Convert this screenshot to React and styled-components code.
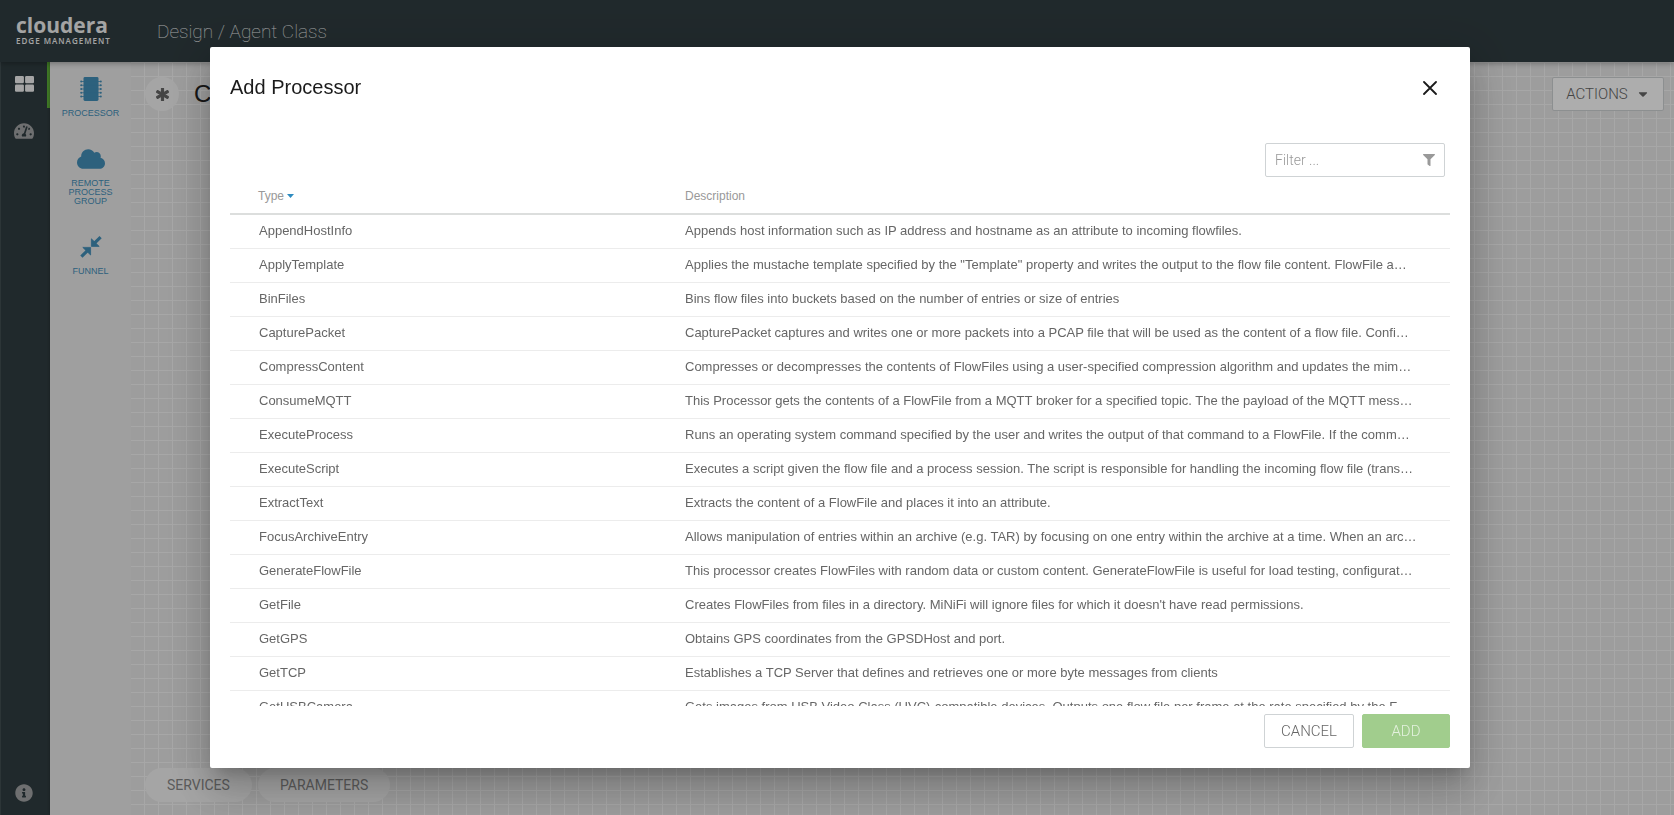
import React from "react";
import styled, { createGlobalStyle } from "styled-components";
import {
  FaTachometerAlt,
  FaInfoCircle,
  FaCloud,
  FaAsterisk,
  FaFilter,
  FaCaretDown,
} from "react-icons/fa";

const sans = '"Liberation Sans", Arial, sans-serif';
const light = 'Roboto, "Liberation Sans", sans-serif';
const brand = '"Open Sans", "Liberation Sans", sans-serif';

const GlobalStyle = createGlobalStyle`
  *, *::before, *::after { box-sizing: border-box; }
  body { margin: 0; font-family: ${sans}; color: #666; overflow: hidden; }
  button, input { font: inherit; color: inherit; }
  h1, h2, p { margin: 0; font-weight: 400; }
`;

const Page = styled.div`
  display: flex;
  flex-direction: column;
  height: 100vh;
`;

const TopBar = styled.header`
  display: flex;
  align-items: center;
  flex: none;
  height: 62px;
  padding: 0 16px;
  gap: 47px;
  background: #303d41;
  box-shadow: 0 1px 6px rgba(0, 0, 0, 0.35);
  z-index: 1;
`;

const Brand = styled.a`
  display: flex;
  flex-direction: column;
  width: 94px;
  color: #f2f2f2;
  text-decoration: none;
  white-space: nowrap;
`;

const BrandName = styled.span`
  font: 700 21px/20px ${brand};
`;

const BrandProduct = styled.span`
  font: 600 8px/12px ${brand};
  letter-spacing: 1px;
`;

const Crumbs = styled.h1`
  padding-top: 2px;
  font: 100 19px/24px ${light};
  color: #eef0f0;
`;

const Body = styled.div`
  display: flex;
  flex: 1;
  min-height: 0;
`;

const NavRail = styled.nav`
  display: flex;
  flex-direction: column;
  flex: none;
  width: 50px;
  background: #303d41;
  border-left: 1px solid #414e52;
`;

const NavItem = styled.a`
  display: flex;
  align-items: center;
  justify-content: center;
  height: ${(p) => (p.$last ? 44 : 46)}px;
  border-right: 3px solid ${(p) => (p.$active ? "#5eb138" : "transparent")};
  color: ${(p) => (p.$active ? "#f4f4f4" : "#a2a4a6")};
  ${(p) => p.$last && "margin-top: auto;"}
`;

const Palette = styled.aside`
  display: flex;
  flex-direction: column;
  align-items: center;
  gap: 29px;
  flex: none;
  width: 81px;
  padding-top: 15px;
  background: #ebebeb;
  box-shadow: 0 0 3px rgba(0, 0, 0, 0.3);
`;

const PaletteItem = styled.button`
  display: flex;
  flex-direction: column;
  align-items: center;
  gap: 8px;
  width: 60px;
  padding: 0;
  border: 0;
  background: none;
  color: #438fb9;
  font-size: 9px;
  line-height: 9px;

  svg { height: 24px; }
`;

const Canvas = styled.main`
  display: flex;
  flex-direction: column;
  justify-content: space-between;
  flex: 1;
  min-width: 0;
  padding: 15px 10px 13px 14px;
  background-color: #e8e8e8;
  background-image: linear-gradient(#f7f7f7 1px, transparent 1px),
    linear-gradient(90deg, #f7f7f7 1px, transparent 1px);
  background-size: 14px 14px;
  background-position: 13px 14px;
`;

const CanvasBar = styled.div`
  display: flex;
  align-items: center;
  gap: ${(p) => p.$gap}px;
`;

const StatusDot = styled.span`
  display: flex;
  align-items: center;
  justify-content: center;
  width: 34px;
  height: 34px;
  border-radius: 50%;
  background: #f4f4f4;
  color: #666;
`;

const FlowTitle = styled.h2`
  flex: 1;
  font-size: 24px;
  line-height: 34px;
  color: #222;
`;

const Button = styled.button`
  display: flex;
  align-items: center;
  justify-content: center;
  height: 34px;
  min-width: ${(p) => p.$width || 88}px;
  gap: 8px;
  padding: 0 13px;
  border: 1px solid ${(p) => (p.$primary ? "#a1cd8d" : "#cfd3d5")};
  border-radius: 2px;
  background: ${(p) => (p.$primary ? "#a1cd8d" : "#fff")};
  color: ${(p) => (p.$primary ? "#e4f1de" : "#666")};
  font: 300 15px/20px ${light};
`;

const Pill = styled.button`
  height: 34px;
  padding: 0 22px;
  border: 0;
  border-radius: 17px;
  background: #f4f4f4;
  color: #888;
  font: 400 14px/20px ${light};
`;

const Backdrop = styled.div`
  position: fixed;
  inset: 0;
  z-index: 2;
  display: flex;
  padding: 47px 204px 47px 210px;
  background: rgba(0, 0, 0, 0.32);
`;

const Dialog = styled.section`
  display: flex;
  flex-direction: column;
  flex: 1;
  min-width: 0;
  padding: 20px;
  border-radius: 2px;
  background: #fff;
  box-shadow: 0 11px 15px -7px rgba(0, 0, 0, 0.2),
    0 24px 38px 3px rgba(0, 0, 0, 0.14), 0 9px 46px 8px rgba(0, 0, 0, 0.12);
`;

const DialogHead = styled.header`
  display: flex;
  align-items: center;
  justify-content: space-between;
  height: 42px;
  margin-bottom: 34px;
`;

const DialogTitle = styled.h2`
  padding-bottom: 2px;
  font-size: 20px;
  line-height: 24px;
  color: #1b1b1b;
`;

const CloseButton = styled.button`
  display: flex;
  align-items: center;
  justify-content: center;
  width: 40px;
  height: 40px;
  padding: 0;
  border: 0;
  background: none;
  color: #1b1b1b;
`;

const FilterBox = styled.label`
  display: flex;
  align-items: center;
  align-self: flex-end;
  flex: none;
  width: 180px;
  height: 34px;
  margin-right: 5px;
  padding: 0 9px;
  border: 1px solid #cfd3d5;
  border-radius: 2px;
  color: #999;
`;

const FilterInput = styled.input`
  flex: 1;
  min-width: 0;
  padding: 0;
  border: 0;
  outline: 0;
  background: none;
  font: 300 14px/20px ${light};

  &::placeholder { color: #999; opacity: 1; }
`;

const TableScroll = styled.div`
  flex: 1;
  min-height: 0;
  overflow-y: auto;
  scrollbar-width: none;
`;

const Table = styled.table`
  width: 100%;
  table-layout: fixed;
  border-spacing: 0;
`;

const HeadCell = styled.th`
  position: sticky;
  top: 0;
  width: ${(p) => p.$width || "auto"};
  height: 38px;
  padding: 2px 28px 0 ${(p) => p.$indent}px;
  border-bottom: 2px solid #dcdedd;
  background: #fff;
  color: #999;
  font-size: 12px;
  font-weight: 400;
  line-height: 16px;
  text-align: left;
`;

const SortArrow = styled.svg`
  margin-left: 3px;
  vertical-align: 2px;
`;

const Cell = styled.td`
  height: 34px;
  padding: 0 28px 2px ${(p) => p.$indent}px;
  border-bottom: 1px solid #ececec;
  color: #666;
  font-size: 13px;
  line-height: 16px;
  overflow: hidden;
  text-overflow: ellipsis;
  white-space: nowrap;
`;

const DialogFoot = styled.footer`
  display: flex;
  justify-content: flex-end;
  gap: 8px;
  margin-top: 8px;
`;

const rows = [
  ["AppendHostInfo", "Appends host information such as IP address and hostname as an attribute to incoming flowfiles."],
  ["ApplyTemplate", 'Applies the mustache template specified by the "Template" property and writes the output to the flow file content. FlowFile a…'],
  ["BinFiles", "Bins flow files into buckets based on the number of entries or size of entries"],
  ["CapturePacket", "CapturePacket captures and writes one or more packets into a PCAP file that will be used as the content of a flow file. Confi…"],
  ["CompressContent", "Compresses or decompresses the contents of FlowFiles using a user-specified compression algorithm and updates the mim…"],
  ["ConsumeMQTT", "This Processor gets the contents of a FlowFile from a MQTT broker for a specified topic. The the payload of the MQTT mess…"],
  ["ExecuteProcess", "Runs an operating system command specified by the user and writes the output of that command to a FlowFile. If the comm…"],
  ["ExecuteScript", "Executes a script given the flow file and a process session. The script is responsible for handling the incoming flow file (trans…"],
  ["ExtractText", "Extracts the content of a FlowFile and places it into an attribute."],
  ["FocusArchiveEntry", "Allows manipulation of entries within an archive (e.g. TAR) by focusing on one entry within the archive at a time. When an arc…"],
  ["GenerateFlowFile", "This processor creates FlowFiles with random data or custom content. GenerateFlowFile is useful for load testing, configurat…"],
  ["GetFile", "Creates FlowFiles from files in a directory. MiNiFi will ignore files for which it doesn't have read permissions."],
  ["GetGPS", "Obtains GPS coordinates from the GPSDHost and port."],
  ["GetTCP", "Establishes a TCP Server that defines and retrieves one or more byte messages from clients"],
  ["GetUSBCamera", "Gets images from USB Video Class (UVC)-compatible devices. Outputs one flow file per frame at the rate specified by the F…"],
];

function TilesIcon() {
  return (
    <svg width="19" height="18" viewBox="0 0 19 18" fill="currentColor" aria-hidden="true">
      <rect x="0" y="0" width="8.9" height="7.2" rx="1.2" />
      <rect x="10.1" y="0" width="8.9" height="7.2" rx="1.2" />
      <rect x="0" y="8.6" width="8.9" height="7.2" rx="1.2" />
      <rect x="10.1" y="8.6" width="8.9" height="7.2" rx="1.2" />
    </svg>
  );
}

function ChipIcon() {
  const pins = [4.4, 8.2, 12, 15.8, 19.4];
  return (
    <svg width="22" height="24" viewBox="0 0 22 24" fill="currentColor" aria-hidden="true">
      <rect x="3.5" y="0" width="15" height="24" rx="1.4" />
      {pins.map((y) => (
        <g key={y}>
          <rect x="1" y={y - 0.4} width="20" height="0.8" />
          <circle cx="1.2" cy={y} r="1" />
          <circle cx="20.8" cy={y} r="1" />
        </g>
      ))}
    </svg>
  );
}

function FunnelIcon() {
  return (
    <svg width="22" height="24" viewBox="0 -1 22 24" fill="currentColor" stroke="currentColor" aria-hidden="true">
      <path d="M11.4 2.8V10.4H19.2z" strokeWidth="0.8" strokeLinejoin="round" />
      <path d="M10.6 19V11.4H2.8z" strokeWidth="0.8" strokeLinejoin="round" />
      <path d="M14.5 7.2L20.6 1.2M7.5 14.6L1.4 20.6" strokeWidth="3.2" />
    </svg>
  );
}

export default function App() {
  return (
    <>
      <GlobalStyle />
      <Page>
        <TopBar>
          <Brand href="#">
            <BrandName>cloudera</BrandName>
            <BrandProduct>EDGE MANAGEMENT</BrandProduct>
          </Brand>
          <Crumbs>Design / Agent Class</Crumbs>
        </TopBar>
        <Body>
          <NavRail>
            <NavItem href="#" $active aria-label="Design">
              <TilesIcon />
            </NavItem>
            <NavItem href="#" aria-label="Monitor">
              <FaTachometerAlt size={20} />
            </NavItem>
            <NavItem href="#" $last aria-label="About">
              <FaInfoCircle size={18} />
            </NavItem>
          </NavRail>
          <Palette>
            <PaletteItem>
              <ChipIcon />
              PROCESSOR
            </PaletteItem>
            <PaletteItem>
              <FaCloud size={28} />
              REMOTE PROCESS GROUP
            </PaletteItem>
            <PaletteItem>
              <FunnelIcon />
              FUNNEL
            </PaletteItem>
          </Palette>
          <Canvas>
            <CanvasBar $gap={15}>
              <StatusDot>
                <FaAsterisk size={13} stroke="currentColor" strokeWidth={40} />
              </StatusDot>
              <FlowTitle>C</FlowTitle>
              <Button $width={112}>
                ACTIONS
                <FaCaretDown size={14} />
              </Button>
            </CanvasBar>
            <CanvasBar $gap={6}>
              <Pill>SERVICES</Pill>
              <Pill>PARAMETERS</Pill>
            </CanvasBar>
          </Canvas>
        </Body>
      </Page>
      <Backdrop>
        <Dialog role="dialog" aria-modal="true" aria-labelledby="dialog-title">
          <DialogHead>
            <DialogTitle id="dialog-title">Add Processor</DialogTitle>
            <CloseButton aria-label="Close">
              <svg width="14" height="14" viewBox="0 0 14 14" stroke="currentColor" strokeWidth="1.8" strokeLinecap="round">
                <path d="M1 1l12 12M13 1L1 13" />
              </svg>
            </CloseButton>
          </DialogHead>
          <FilterBox>
            <FilterInput type="text" placeholder="Filter ..." aria-label="Filter" />
            <FaFilter size={12} />
          </FilterBox>
          <TableScroll>
            <Table>
              <thead>
                <tr>
                  <HeadCell $indent={28} $width="455px">
                    Type
                    <SortArrow width="7" height="4" viewBox="0 0 7 4" fill="#2d8bc0">
                      <path d="M0 0h7L3.5 4z" />
                    </SortArrow>
                  </HeadCell>
                  <HeadCell $indent={0}>Description</HeadCell>
                </tr>
              </thead>
              <tbody>
                {rows.map(([type, description]) => (
                  <tr key={type}>
                    <Cell $indent={29}>{type}</Cell>
                    <Cell $indent={0}>{description}</Cell>
                  </tr>
                ))}
              </tbody>
            </Table>
          </TableScroll>
          <DialogFoot>
            <Button $width={90}>CANCEL</Button>
            <Button $primary>ADD</Button>
          </DialogFoot>
        </Dialog>
      </Backdrop>
    </>
  );
}
